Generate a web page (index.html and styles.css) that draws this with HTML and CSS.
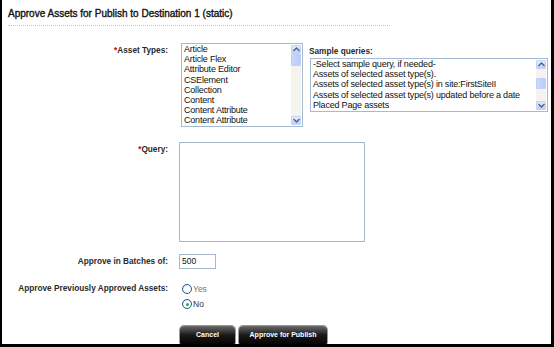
FILE: index.html
```html
<!DOCTYPE html>
<html>
<head>
<meta charset="utf-8">
<link rel="stylesheet" href="styles.css">
</head>
<body>
<div class="frame">
  <h1 class="title">Approve Assets for Publish to Destination 1 (static)</h1>
  <div class="rule"></div>

  <div class="row row-types">
    <div class="label"><span class="req">*</span>Asset Types:</div>
    <div class="listbox types">
      <ul class="items">
        <li>Article</li>
        <li>Article Flex</li>
        <li>Attribute Editor</li>
        <li>CSElement</li>
        <li>Collection</li>
        <li>Content</li>
        <li>Content Attribute</li>
        <li>Content Attribute</li>
      </ul>
      <div class="scroll">
        <div class="sbtn up"><svg width="7" height="5" viewBox="0 0 7 5"><path d="M0.5 4 L3.5 1 L6.5 4" fill="none" stroke="#4d6185" stroke-width="1.4"/></svg></div>
        <div class="thumb t-types"></div>
        <div class="track"></div>
        <div class="sbtn down"><svg width="7" height="5" viewBox="0 0 7 5"><path d="M0.5 1 L3.5 4 L6.5 1" fill="none" stroke="#4d6185" stroke-width="1.4"/></svg></div>
      </div>
    </div>
    <div class="samples">
      <div class="sample-label">Sample queries:</div>
      <div class="listbox sample">
        <ul class="items">
          <li>-Select sample query, if needed-</li>
          <li>Assets of selected asset type(s).</li>
          <li>Assets of selected asset type(s) in site:FirstSiteII</li>
          <li>Assets of selected asset type(s) updated before a date</li>
          <li>Placed Page assets</li>
        </ul>
        <div class="scroll">
          <div class="sbtn up"><svg width="7" height="5" viewBox="0 0 7 5"><path d="M0.5 4 L3.5 1 L6.5 4" fill="none" stroke="#4d6185" stroke-width="1.4"/></svg></div>
          <div class="track small"></div>
          <div class="thumb t-sample"></div>
          <div class="track"></div>
          <div class="sbtn down"><svg width="7" height="5" viewBox="0 0 7 5"><path d="M0.5 1 L3.5 4 L6.5 1" fill="none" stroke="#4d6185" stroke-width="1.4"/></svg></div>
        </div>
      </div>
    </div>
  </div>

  <div class="row row-query">
    <div class="label"><span class="req">*</span>Query:</div>
    <div class="textarea"></div>
  </div>

  <div class="row row-batch">
    <div class="label">Approve in Batches of:</div>
    <div class="input">500</div>
  </div>

  <div class="row row-prev">
    <div class="label">Approve Previously Approved Assets:</div>
    <div class="radios">
      <div class="radio"><span class="circle"></span><span class="rtext off">Yes</span></div>
      <div class="radio"><span class="circle on"></span><span class="rtext">No</span></div>
    </div>
  </div>

  <div class="row row-buttons">
    <div class="label"></div>
    <div class="buttons">
      <div class="btn cancel">Cancel</div>
      <div class="btn approve">Approve for Publish</div>
    </div>
  </div>
</div>
</body>
</html>
```

FILE: styles.css
```css
html, body {
  margin: 0;
  padding: 0;
  background: #fff;
}
.frame {
  width: 554px;
  height: 347px;
  box-sizing: border-box;
  border-left: 2px solid #000;
  border-right: 3px solid #000;
  border-bottom: 3px solid #000;
  padding: 7px 0 0 6px;
  overflow: hidden;
  font-family: "Liberation Sans", Arial, sans-serif;
  color: #222;
}
.title {
  margin: 0;
  font-size: 10px;
  font-weight: normal;
  line-height: 13px;
  letter-spacing: 0;
  color: #111;
  -webkit-text-stroke: 0.35px #111;
}
.rule {
  width: 382px;
  margin-top: 5px;
  border-top: 1px dotted #c4c4c4;
}
.row {
  display: flex;
  align-items: flex-start;
}
.label {
  width: 160px;
  flex: none;
  text-align: right;
  padding-right: 11px;
  font-size: 8.25px;
  font-weight: bold;
  line-height: 10px;
  color: #2a2a2a;
}
.req {
  color: #d40000;
}
.row-types {
  margin-top: 17px;
}
.row-types .label {
  padding-top: 3px;
}
.listbox {
  display: flex;
  box-sizing: border-box;
  border: 1px solid #a5b9cf;
  background: #fff;
}
.types {
  width: 122px;
  height: 84px;
  margin-left: 2px;
}
.items {
  list-style: none;
  margin: 0;
  padding: 0 0 0 2px;
  flex: 1;
  font-size: 9px;
  line-height: 10.2px;
  color: #111;
  letter-spacing: -0.2px;
  white-space: nowrap;
  overflow: hidden;
}
.scroll {
  width: 10px;
  flex: none;
  display: flex;
  flex-direction: column;
  background: #f4f3ee;
  margin: 1px 1px 1px 0;
}
.sbtn {
  height: 9px;
  flex: none;
  box-sizing: border-box;
  border: 1px solid #c3d3fd;
  border-radius: 1px;
  background: linear-gradient(#e4ecfd, #bfd0f6);
  display: flex;
  align-items: center;
  justify-content: center;
}
.thumb {
  flex: none;
  box-sizing: border-box;
  border: 1px solid #bed0f8;
  border-radius: 1px;
  background: linear-gradient(90deg, #c9d8fc, #b9cdf7);
}
.t-types {
  height: 12px;
}
.t-sample {
  height: 11px;
}
.track {
  flex: 1;
}
.track.small {
  flex: none;
  height: 9px;
}
.samples {
  margin-left: 6px;
  padding-top: 4px;
}
.sample-label {
  font-size: 8.25px;
  font-weight: bold;
  line-height: 10px;
  color: #2a2a2a;
}
.sample {
  width: 238px;
  height: 54px;
  margin-top: 1px;
  margin-left: 1px;
}
.row-query {
  margin-top: 15px;
}
.row-query .label {
  padding-top: 3px;
}
.textarea {
  width: 186px;
  height: 100px;
  box-sizing: border-box;
  border: 1px solid #a5b9cf;
  background: #fff;
}
.row-batch {
  margin-top: 12px;
  align-items: center;
}
.input {
  width: 37px;
  height: 15px;
  box-sizing: border-box;
  border: 1px solid #a5b9cf;
  font-size: 8.5px;
  line-height: 13px;
  padding-left: 2px;
  color: #111;
}
.row-prev {
  margin-top: 15px;
}
.radios {
  display: flex;
  flex-direction: column;
  gap: 5px;
  padding-left: 3px;
}
.radio {
  display: flex;
  align-items: center;
  height: 10px;
}
.circle {
  width: 10px;
  height: 10px;
  box-sizing: border-box;
  border: 1px solid #24558a;
  border-radius: 50%;
  background: radial-gradient(circle at 60% 60%, #fff 40%, #dcdcd6);
  position: relative;
  margin-right: 1px;
}
.circle.on::after {
  content: "";
  position: absolute;
  left: 2.5px;
  top: 2.5px;
  width: 3px;
  height: 3px;
  border-radius: 50%;
  background: #2fa82f;
}
.rtext {
  font-size: 8.5px;
  color: #333;
  line-height: 10px;
}
.rtext.off {
  color: #777;
}
.row-buttons {
  margin-top: 17px;
}
.buttons {
  display: flex;
  gap: 4px;
  margin-left: 1px;
}
.btn {
  height: 20px;
  box-sizing: border-box;
  border-radius: 4px;
  background: linear-gradient(#6a6a6a, #1a1a1a 45%, #000);
  color: #fff;
  font-size: 7px;
  font-weight: bold;
  text-align: center;
  line-height: 17px;
  box-shadow: 0 0 0 1px #999;
}
.cancel {
  width: 55px;
}
.approve {
  width: 88px;
}
```
